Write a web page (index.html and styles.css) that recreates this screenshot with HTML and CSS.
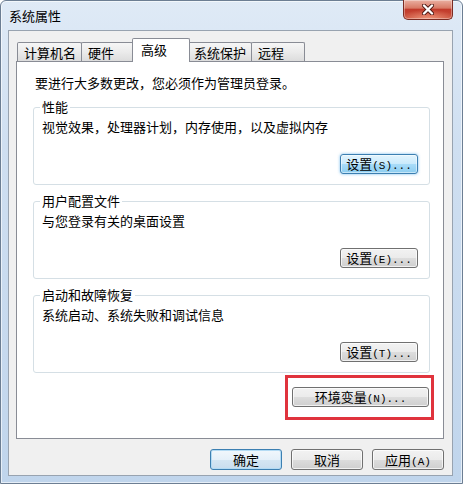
FILE: index.html
```html
<!DOCTYPE html>
<html lang="zh-CN">
<head>
    <meta charset="UTF-8">
    <meta name="viewport" content="width=device-width, initial-scale=1.0">
    <title>系统属性</title>
    <link rel="stylesheet" href="styles.css">
</head>
<body>
<div class="window">
    <div class="titlebar">
        <span class="title">系统属性</span>
        <button class="close" title="关闭">
            <svg width="12" height="11" viewBox="0 0 12 11">
                <path d="M2 1.5 L10 9.5 M10 1.5 L2 9.5" stroke="#4a1611" stroke-width="4" stroke-linecap="round"/>
                <path d="M2 1.5 L10 9.5 M10 1.5 L2 9.5" stroke="#fff" stroke-width="2.4" stroke-linecap="round"/>
            </svg>
        </button>
    </div>
    <div class="client">
        <div class="tabs">
            <div class="tab">计算机名</div>
            <div class="tab">硬件</div>
            <div class="tab active">高级</div>
            <div class="tab">系统保护</div>
            <div class="tab">远程</div>
        </div>
        <div class="panel">
            <p class="intro">要进行大多数更改，您必须作为管理员登录。</p>

            <fieldset class="group">
                <legend>性能</legend>
                <p>视觉效果，处理器计划，内存使用，以及虚拟内存</p>
                <div class="group-actions">
                    <button class="btn hot">设置<span class="key">(S)...</span></button>
                </div>
            </fieldset>

            <fieldset class="group">
                <legend>用户配置文件</legend>
                <p>与您登录有关的桌面设置</p>
                <div class="group-actions">
                    <button class="btn">设置<span class="key">(E)...</span></button>
                </div>
            </fieldset>

            <fieldset class="group">
                <legend>启动和故障恢复</legend>
                <p>系统启动、系统失败和调试信息</p>
                <div class="group-actions">
                    <button class="btn">设置<span class="key">(T)...</span></button>
                </div>
            </fieldset>

            <div class="highlight">
                <button class="btn wide">环境变量<span class="key">(N)...</span></button>
            </div>
        </div>
        <div class="actions">
            <button class="btn default">确定</button>
            <button class="btn">取消</button>
            <button class="btn">应用<span class="key">(A)</span></button>
        </div>
    </div>
</div>
</body>
</html>
```

FILE: styles.css
```css
body {
    margin: 0;
    font-family: "Noto Sans CJK SC", sans-serif;
    font-size: 13px;
    color: #000;
}
.window {
    width: 463px;
    height: 484px;
    box-sizing: border-box;
    display: flex;
    flex-direction: column;
    border: 1px solid #6c7e93;
    border-radius: 6px 6px 0 0;
    background: linear-gradient(180deg, #dfeaf6 0%, #cfdff1 30%, #c0d5ec 100%);
    box-shadow: inset 0 0 0 1px rgba(255, 255, 255, 0.6);
}
.titlebar {
    height: 29px;
    display: flex;
    align-items: center;
    padding-left: 8px;
}
.title {
    line-height: 16px;
}
.close {
    margin: -1px 9px 0 auto;
    align-self: flex-start;
    width: 50px;
    height: 20px;
    padding: 0;
    display: flex;
    align-items: center;
    justify-content: center;
    border: 1px solid #7b2b22;
    border-top: none;
    border-radius: 0 0 5px 5px;
    background:
        radial-gradient(ellipse 60% 50% at 50% 100%, rgba(255, 180, 150, 0.7), transparent),
        linear-gradient(180deg, #eab0a2 0%, #d87a66 42%, #c23b2c 50%, #c9503b 100%);
    box-shadow: inset 0 0 0 1px rgba(255, 255, 255, 0.35);
}
.client {
    flex: 1;
    display: flex;
    flex-direction: column;
    margin: 0 9px 7px 7px;
    padding: 7px 8px 0 7px;
    background: #f0f0f0;
    border: 1px solid #98a3b0;
}

/* tab strip */
.tabs {
    display: flex;
    align-items: flex-end;
    padding-left: 1px;
}
.tab {
    box-sizing: border-box;
    min-width: 54px;
    height: 19px;
    padding: 2px 5px 0 6px;
    line-height: 16px;
    margin-left: -1px;
    border: 1px solid #898c95;
    border-bottom: none;
    border-radius: 2px 2px 0 0;
    background: linear-gradient(180deg, #f6f6f6 0%, #ebebeb 50%, #dcdcdc 100%);
}
.tab:first-child {
    margin-left: 0;
}
.tab.active {
    height: 24px;
    min-width: 58px;
    padding: 3px 5px 4px 8px;
    margin: 0 -2px -1px -3px;
    background: #fff;
    z-index: 1;
}

.panel {
    display: flex;
    flex-direction: column;
    padding: 13px 13px 18px 16px;
    background: #fff;
    border: 1px solid #898c95;
}
.panel p {
    margin: 0;
    line-height: 16px;
}
.intro {
    margin-left: 2px !important;
}

/* group boxes */
.group {
    margin: 8px 0 0;
    padding: 0 11px 10px 8px;
    min-width: 0;
    border: 1px solid #d5dfe5;
    border-radius: 3px;
}
.group legend {
    padding: 0 2px;
    margin-left: -2px;
    line-height: 16px;
}
.group p {
    margin-top: 4px !important;
}
.group-actions {
    display: flex;
    justify-content: flex-end;
    margin-top: 19px;
}

.highlight {
    align-self: flex-end;
    margin: 2px -4px 0 0;
    padding: 9px 2px 10px 4px;
    border: 3px solid #e0333d;
}

/* push buttons */
.btn {
    box-sizing: border-box;
    width: 78px;
    height: 20px;
    padding: 0;
    font-family: inherit;
    font-size: 13px;
    line-height: 18px;
    color: #000;
    text-align: center;
    border: 1px solid #707070;
    border-radius: 3px;
    background: linear-gradient(180deg, #f2f2f2 0%, #ebebeb 50%, #dddddd 51%, #cfcfcf 100%);
    box-shadow: inset 0 0 0 1px rgba(255, 255, 255, 0.7);
}
.btn .key {
    font-family: "Liberation Mono", monospace;
    font-size: 11px;
}
.btn.hot {
    border-color: #3c7fb1;
    background: linear-gradient(180deg, #e3f4fd 0%, #c9eafc 50%, #a9dcf9 51%, #8ccdf0 100%);
    box-shadow: inset 0 0 0 1px rgba(255, 255, 255, 0.5), 0 0 3px rgba(60, 160, 230, 0.7);
}
.btn.wide {
    width: 137px;
}
.btn.default {
    border-color: #3c7fb1;
    background: linear-gradient(180deg, #f1f7fc 0%, #e5f0f9 50%, #d5e6f3 51%, #c8ddee 100%);
    box-shadow: inset 0 0 0 1px #b4dbf4;
}

.actions {
    display: flex;
    justify-content: flex-end;
    gap: 9px;
    margin-top: 10px;
}
.actions .btn {
    width: 72px;
    height: 21px;
    line-height: 19px;
}
```
